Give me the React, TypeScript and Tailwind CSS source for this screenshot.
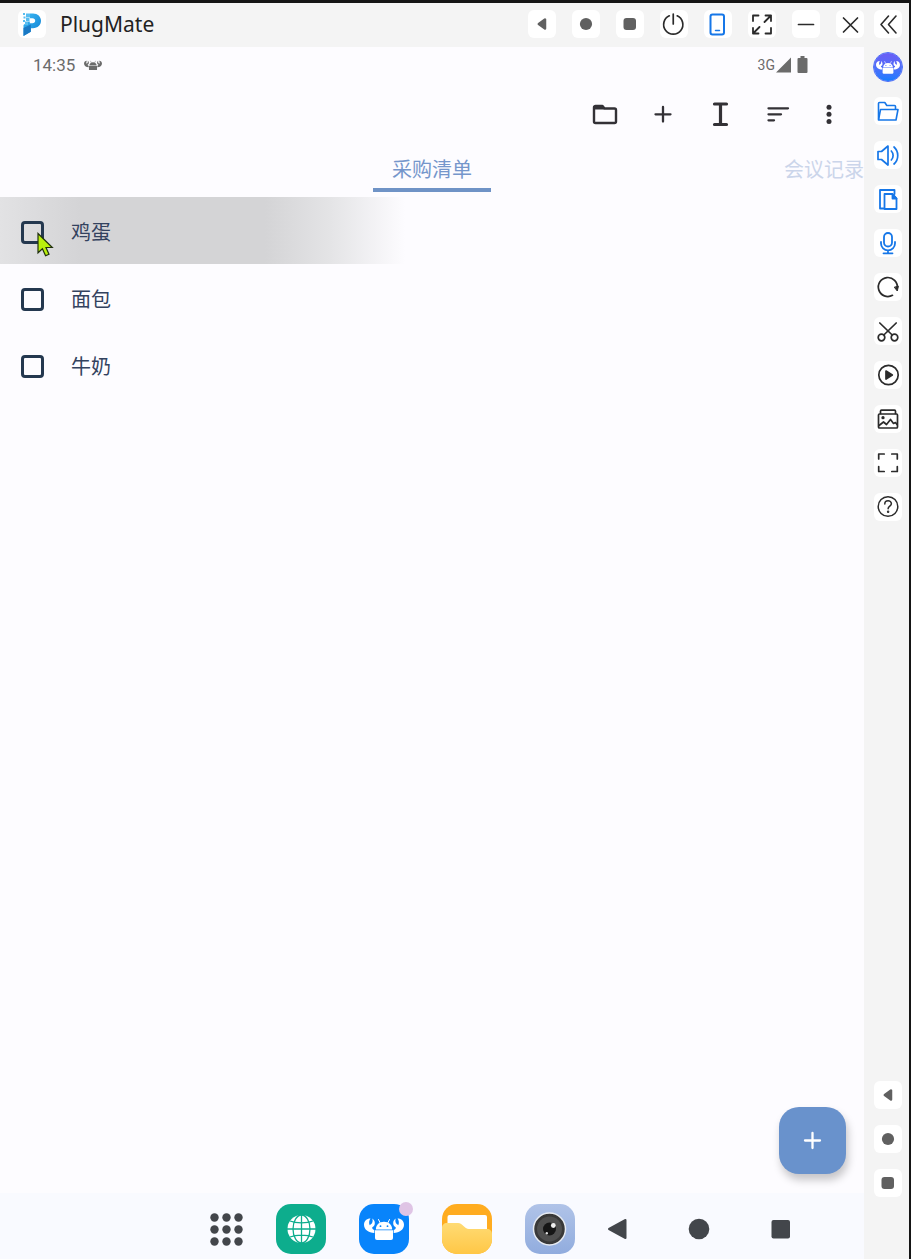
import type { ReactNode } from "react";

const items = ["鸡蛋", "面包", "牛奶"];

function Stroke({ children, width = 1.7 }: { children: ReactNode; width?: number }) {
  return (
    <svg
      viewBox="0 0 28 28"
      className="size-7"
      fill="none"
      stroke="currentColor"
      strokeWidth={width}
      strokeLinecap="round"
      strokeLinejoin="round"
      aria-hidden="true"
    >
      {children}
    </svg>
  );
}

const BackKey = () => (
  <Stroke>
    <path d="M10.800 14 17 9.500v9z" fill="currentColor" strokeWidth="2.500" />
  </Stroke>
);

const HomeKey = () => (
  <Stroke>
    <circle cx="14" cy="14" r="6.100" fill="currentColor" stroke="none" />
  </Stroke>
);

const RecentKey = () => (
  <Stroke>
    <rect x="7.500" y="8" width="12.500" height="12" rx="3" fill="currentColor" stroke="none" />
  </Stroke>
);

// Android head and body between two claws
function CrabBot({ className, eyes }: { className: string; eyes: string }) {
  const claw =
    "M6.500 1.500C2.500 1.500 0 4.200 0 7.800c0 4.700 4.500 8.200 10.300 8.200v-3C8.500 12.300 8 11.300 8.300 10.200c1.700-.8 2.700-2.300 2.500-4.500-.1-1.900-1.200-3.500-2.600-4.200.7 1.700.6 3.500-.4 4.900L5.700 8.200C4.700 5.900 5 3.300 6.500 1.500z";
  return (
    <svg viewBox="0 0 40 24" className={className} fill="currentColor" aria-hidden="true">
      <path d={claw} />
      <path d={claw} transform="matrix(-1 0 0 1 40 0)" />
      <path d="M11.800 12.400C12 7.800 15.300 4.800 20 4.800s8 3 8.200 7.600z" />
      <path d="M14.500 2.500 16.200 6M25.500 2.500 23.800 6" stroke="currentColor" strokeWidth="1" strokeLinecap="round" />
      <path d="M11 13.300h18v7.700a2 2 0 0 1-2 2H13a2 2 0 0 1-2-2z" />
      <circle cx="16.500" cy="9.200" r=".9" fill={eyes} />
      <circle cx="23.500" cy="9.200" r=".9" fill={eyes} />
    </svg>
  );
}

function Key({ label, tone = "text-[#2b2b2b]", children }: { label: string; tone?: string; children: ReactNode }) {
  return (
    <button type="button" aria-label={label} className={`size-7 shrink-0 rounded-md bg-white ${tone}`}>
      {children}
    </button>
  );
}

function TitleBar() {
  return (
    <header className="flex h-11 items-center justify-between bg-[#f4f4f4] pr-[7px] pb-0.5 pl-[18px]">
      <div className="flex items-center gap-3.5">
        <svg viewBox="0 0 28 28" className="size-7 rounded-md bg-white" aria-hidden="true">
          <defs>
            <linearGradient id="brand" x1="0" y1="0" x2="1" y2="1">
              <stop offset="0" stopColor="#3dbcf7" />
              <stop offset="1" stopColor="#117fd0" />
            </linearGradient>
          </defs>
          <path
            d="M12 3.500h3c4.700 0 8 3.100 8 7.300s-3.300 7.400-8 7.400h-2.200v3.600L5.500 26V15l4.500-3.500h1.800v1.800h2.700c1.600 0 2.700-1 2.700-2.500s-1.100-2.600-2.700-2.600H12z"
            fill="url(#brand)"
          />
          <path
            d="M5 3h2v2H5zM8 3.500h4v4H8zM5.500 6.500h2v2h-2zM8 8h3.500v3H8zM5 10h2v2H5zM7 11.500h3V15H7z"
            fill="#58bdf0"
          />
          <path d="m5.500 18 7.300-3.500v7.300L5.500 26z" fill="#1a79c4" />
        </svg>
        <h1 className="font-['Noto_Sans'] text-[21px] leading-7 text-[#222]">PlugMate</h1>
      </div>
      <div className="flex gap-2.5">
        <div className="flex gap-4">
          <Key label="Back" tone="text-[#606060]"><BackKey /></Key>
          <Key label="Home" tone="text-[#606060]"><HomeKey /></Key>
          <Key label="Recent apps" tone="text-[#606060]"><RecentKey /></Key>
          <Key label="Power">
            <Stroke>
              <path d="M9.300 5.800a9.600 9.600 0 1 0 7.900 0M13.250 4v10" />
            </Stroke>
          </Key>
          <Key label="Phone view" tone="text-[#1677e8]">
            <Stroke width={2}>
              <rect x="6.500" y="4.500" width="13.500" height="20" rx="2" />
              <path d="M11.500 20.500h4" strokeWidth="1.500" />
            </Stroke>
          </Key>
          <Key label="Full screen">
            <Stroke width={1.8}>
              <path d="M5 11V5.500h5.500M17.500 23.500H23V18M17.500 5.500H23V11M23 5.500l-6.500 6.500M10.500 23.500H5V18M5 23.500l6.500-6.500" />
            </Stroke>
          </Key>
          <Key label="Minimize">
            <Stroke><path d="M6.500 14.500h15" /></Stroke>
          </Key>
          <Key label="Close">
            <Stroke><path d="m7.500 8 14 14M21.500 8l-14 14" /></Stroke>
          </Key>
        </div>
        <Key label="Collapse">
          <Stroke width={1.6}><path d="m14.500 6-7.500 8.500 7.500 8.500M22 6l-7.500 8.500L22 23" /></Stroke>
        </Key>
      </div>
    </header>
  );
}

function SideBar() {
  return (
    <aside className="flex w-[45px] shrink-0 flex-col items-end justify-between bg-[#f4f4f4] pt-1.5 pr-[7px] pb-[62px]">
      <div className="flex flex-col gap-4">
        <button
          type="button"
          aria-label="Assistant"
          className="flex size-7 items-center justify-center rounded-full bg-linear-to-b from-[#6a5df5] to-[#0d7cff] text-white outline outline-[#4a6cf8]"
        >
          <CrabBot className="w-6" eyes="#3f6bfa" />
        </button>
        <Key label="Files" tone="text-[#1677e8]">
          <Stroke width={1.6}>
            <path d="M4.500 22V6.500a1 1 0 0 1 1-1h5.300l2 3h7.700a1 1 0 0 1 1 1v2.500" />
            <path d="M4.500 23 6.500 12.500h17.500l-2 10.500z" />
          </Stroke>
        </Key>
        <Key label="Volume" tone="text-[#1677e8]">
          <Stroke>
            <path d="M4 10.500v8h3.500l6.500 5.500v-19L7.500 10.500zM17.300 10a6.500 6.500 0 0 1 0 9M20 6c5 4.500 5 12.500 0 17" />
          </Stroke>
        </Key>
        <Key label="Copy" tone="text-[#1677e8]">
          <Stroke width={1.8}>
            <path d="M9.500 23.500H6V5h14.500V9" />
            <path d="M10.500 9h8l4 4.500V24H10.500z" />
            <path d="M18.500 9v4.500h4z" fill="currentColor" />
          </Stroke>
        </Key>
        <Key label="Microphone" tone="text-[#1677e8]">
          <Stroke width={1.8}>
            <rect x="10" y="4" width="8" height="13.500" rx="4" />
            <path d="M7 13v1.500a7 6.800 0 0 0 14 0V13M14 21.500v2.800M9.500 24.300h9" />
          </Stroke>
        </Key>
        <Key label="Rotate">
          <Stroke>
            <path d="M18.500 22.300A9.500 9.500 0 1 1 23.300 15" />
            <path d="m20.500 14.500 2.800 3.500 1-4.500z" fill="currentColor" strokeWidth="1" />
          </Stroke>
        </Key>
        <Key label="Cut">
          <Stroke>
            <circle cx="7.500" cy="20.500" r="3.300" />
            <circle cx="20.500" cy="20.500" r="3.300" />
            <path d="m5.800 6 12.400 12M22.200 6 9.800 18" />
          </Stroke>
        </Key>
        <Key label="Record">
          <Stroke>
            <circle cx="14.500" cy="14" r="9.700" />
            <path d="m12 10 6.300 4-6.300 4z" fill="currentColor" />
          </Stroke>
        </Key>
        <Key label="Gallery">
          <Stroke>
            <rect x="4.500" y="9" width="19" height="14" rx="1" />
            <path d="M6.500 8.500V6.200a1 1 0 0 1 1-1h13a1 1 0 0 1 1 1v2.300M5 20.500l4.500-3.500 3 2.500 4-5 3 4 2-1 1.500 2" />
            <circle cx="9" cy="12.700" r=".8" fill="currentColor" />
          </Stroke>
        </Key>
        <Key label="Screenshot">
          <Stroke>
            <path d="M4.700 10V5h5.500M17.800 5h5.500v5M23.300 17.500v5h-5.500M10.200 22.500H4.700v-5" />
          </Stroke>
        </Key>
        <Key label="Help">
          <Stroke width={1.5}>
            <circle cx="14" cy="13.500" r="9.800" />
            <path d="M10.800 11c0-4.300 6.600-4.100 6.600-.2 0 2.400-3.300 2.400-3.300 5" />
            <circle cx="14.100" cy="18.800" r=".5" fill="currentColor" />
          </Stroke>
        </Key>
      </div>
      <div className="flex flex-col gap-4">
        <Key label="Back" tone="text-[#606060]"><BackKey /></Key>
        <Key label="Home" tone="text-[#606060]"><HomeKey /></Key>
        <Key label="Recent apps" tone="text-[#606060]"><RecentKey /></Key>
      </div>
    </aside>
  );
}

function StatusBar() {
  return (
    <div className="flex h-9 items-center justify-between pr-[55px] pl-[33px] font-[Roboto] text-[#6b6b6b]">
      <div className="flex items-center gap-[9px]">
        <span className="text-[17px] leading-5">14:35</span>
        <CrabBot className="w-[18px]" eyes="#6b6b6b" />
      </div>
      <div className="flex items-center">
        <span className="text-sm leading-5">3G</span>
        <svg viewBox="0 0 34 18" className="h-[18px] w-[34px]" fill="currentColor" aria-hidden="true">
          <path d="M1 16.500 16 1.500v15zM25.500 0h4v2h2a1 1 0 0 1 1 1v13a1 1 0 0 1-1 1h-8a1 1 0 0 1-1-1V3a1 1 0 0 1 1-1h2z" />
        </svg>
      </div>
    </div>
  );
}

function Toolbar() {
  return (
    <div className="flex h-[62px] items-center justify-end pr-[21px] text-[#333136]">
      <div className="flex gap-[30px]">
        <button type="button" aria-label="Folders">
          <Stroke width={2.4}>
            <path d="M5.500 6h7l2 2.500h10A1.500 1.500 0 0 1 26 10v11.500a1.500 1.500 0 0 1-1.500 1.500h-19A1.500 1.500 0 0 1 4 21.500v-14A1.500 1.500 0 0 1 5.500 6z" />
            <path d="M4.500 6h8l2 3.500h-10z" fill="currentColor" stroke="none" />
          </Stroke>
        </button>
        <button type="button" aria-label="Add">
          <Stroke width={2.3}><path d="M15 7v14.500M7.500 14.300h15" /></Stroke>
        </button>
        <button type="button" aria-label="Rename">
          <Stroke width={3.2}><path d="M8.500 4h12M8.500 24.500h12M14.500 4v20" /></Stroke>
        </button>
        <button type="button" aria-label="Sort">
          <Stroke width={2.3}><path d="M4.500 8.300h19.500M4.500 14.300h12.500M4.500 20.300H10" /></Stroke>
        </button>
      </div>
      <button type="button" aria-label="More" className="ml-[23px]">
        <Stroke>
          <g fill="currentColor" stroke="none">
            <circle cx="14" cy="7.200" r="2.500" />
            <circle cx="14" cy="14.300" r="2.500" />
            <circle cx="14" cy="21.400" r="2.500" />
          </g>
        </Stroke>
      </button>
    </div>
  );
}

function Tabs() {
  return (
    <div role="tablist" className="grid h-[52px] grid-cols-[1fr_auto_1fr] overflow-hidden pb-[5px] text-xl leading-7">
      <button
        type="button"
        role="tab"
        aria-selected="true"
        className="col-start-2 border-b-4 border-[#6f93c6] px-[19px] pt-1 text-[#7596cb]"
      >
        采购清单
      </button>
      <button type="button" role="tab" aria-selected="false" className="justify-self-end border-b-4 border-transparent pt-1 text-[#cbd5ea]">
        会议记录
      </button>
    </div>
  );
}

function Pointer() {
  return (
    <svg viewBox="0 0 18 26" className="absolute top-[35px] left-9 z-10 h-[26px] w-[18px]" aria-hidden="true">
      <path
        d="M2 1.500v19.300l4.400-4 3.200 7 3.400-1.500-3-6.800h6.300z"
        fill="#b9ef0c"
        stroke="#20300f"
        strokeWidth="1.200"
      />
    </svg>
  );
}

function Checklist() {
  return (
    <ul>
      {items.map((item, i) => (
        <li key={item} className="relative">
          <label
            className={`flex h-[67px] items-center gap-[27px] pt-[3px] pl-[21px] text-xl text-[#33425e] ${
              i === 0
                ? "bg-[linear-gradient(90deg,#e2e2e4_0px,#d4d4d6_80px,#d4d4d6_265px,#e4e4e6_330px,#fdfcff_405px)]"
                : ""
            }`}
          >
            <input type="checkbox" className="size-[23px] appearance-none rounded-[4px] border-[3px] border-[#24384f] checked:bg-[#24384f]" />
            {item}
          </label>
          {i === 0 && <Pointer />}
        </li>
      ))}
    </ul>
  );
}

function Dock() {
  return (
    <nav className="flex h-[66px] items-center justify-center bg-[#f9faff] pt-1.5 pl-[139px] text-[#43464b]">
      <div className="flex items-center gap-[33px]">
        <button type="button" aria-label="All apps">
          <svg viewBox="0 0 33 33" className="size-[33px]" fill="currentColor" aria-hidden="true">
            {[4.5, 16.5, 28.5].map((y) =>
              [4.5, 16.5, 28.5].map((x) => <circle key={`${x}-${y}`} cx={x} cy={y} r="4.200" />),
            )}
          </svg>
        </button>
        <button type="button" aria-label="Browser" className="size-[50px] rounded-[15px] bg-[#0dad8d]">
          <svg viewBox="0 0 50 50" fill="none" stroke="#0dad8d" strokeWidth="1.300" aria-hidden="true">
            <circle cx="25.500" cy="25" r="14" fill="#fff" stroke="none" />
            <ellipse cx="25.500" cy="25" rx="8.500" ry="14" />
            <path d="M25.500 10v30M11 25h30M14 17c6 2.500 17 2.500 23 0M14 33c6-2.500 17-2.500 23 0" />
          </svg>
        </button>
        <button
          type="button"
          aria-label="Assistant"
          className="relative flex size-[50px] items-center justify-center rounded-[15px] bg-[#0884fb] text-white"
        >
          <CrabBot className="w-10" eyes="#0884fb" />
          <span className="absolute -top-0.5 -right-1 size-3.5 rounded-full bg-[#dfc4e5]" />
        </button>
        <button type="button" aria-label="File manager" className="size-[50px] overflow-hidden rounded-[15px] bg-[#ffac20]">
          <svg viewBox="0 0 50 50" aria-hidden="true">
            <defs>
              <linearGradient id="folder" x1="0" y1="0" x2="0" y2="1">
                <stop offset="0" stopColor="#ffdb74" />
                <stop offset="1" stopColor="#ffc746" />
              </linearGradient>
            </defs>
            <rect x="5.500" y="11" width="39.500" height="20" rx="2" fill="#fff" />
            <path d="M0 24c0-3 2-5 5-5h11c5 0 6 6 11 6h18c3 0 5 2 5 5v20H0z" fill="url(#folder)" />
          </svg>
        </button>
        <button
          type="button"
          aria-label="Camera"
          className="size-[50px] rounded-[15px] bg-linear-to-b from-[#b0c3e8] to-[#91acde]"
        >
          <svg viewBox="0 0 50 50" aria-hidden="true">
            <circle cx="24.500" cy="25" r="16" fill="#393939" stroke="#e7ebf2" strokeWidth="1.500" />
            <circle cx="24.500" cy="25" r="12.500" fill="#505050" />
            <circle cx="24.500" cy="25" r="6.500" fill="#161616" />
            <circle cx="28.300" cy="21.500" r="2.400" fill="#eee" />
            <circle cx="21.800" cy="29.300" r="1.200" fill="#ddd" />
          </svg>
        </button>
      </div>
      <div className="ml-[30px] flex items-center gap-[58px]">
        <button type="button" aria-label="Back">
          <svg viewBox="0 0 24 24" className="size-6" fill="currentColor" stroke="currentColor" strokeWidth="2" strokeLinejoin="round" aria-hidden="true">
            <path d="M4 12 20.500 3v18z" />
          </svg>
        </button>
        <button type="button" aria-label="Home">
          <svg viewBox="0 0 24 24" className="size-6" fill="currentColor" aria-hidden="true">
            <circle cx="12" cy="12" r="10.300" />
          </svg>
        </button>
        <button type="button" aria-label="Recent apps">
          <svg viewBox="0 0 24 24" className="size-6" fill="currentColor" aria-hidden="true">
            <rect x="2.500" y="3" width="18.500" height="18.500" rx="2" />
          </svg>
        </button>
      </div>
    </nav>
  );
}

export default function App() {
  return (
    <div className="flex min-h-screen flex-col border-t-[3px] border-r-2 border-[#151515] bg-[#f4f4f4] font-['Noto_Sans_CJK_SC',sans-serif]">
      <TitleBar />
      <div className="flex flex-1">
        <main className="flex min-w-0 flex-1 flex-col bg-[#fdfcff]">
          <StatusBar />
          <Toolbar />
          <Tabs />
          <Checklist />
          <button
            type="button"
            aria-label="New item"
            className="mt-auto mr-[18px] mb-[19px] flex size-[67px] items-center justify-center self-end rounded-[20px] bg-[#6992cc] text-white shadow-[2px_6px_8px_rgba(0,0,0,0.22)]"
          >
            <Stroke width={2.3}><path d="M13.500 6v15M6 13.500h15" /></Stroke>
          </button>
          <Dock />
        </main>
        <SideBar />
      </div>
    </div>
  );
}
